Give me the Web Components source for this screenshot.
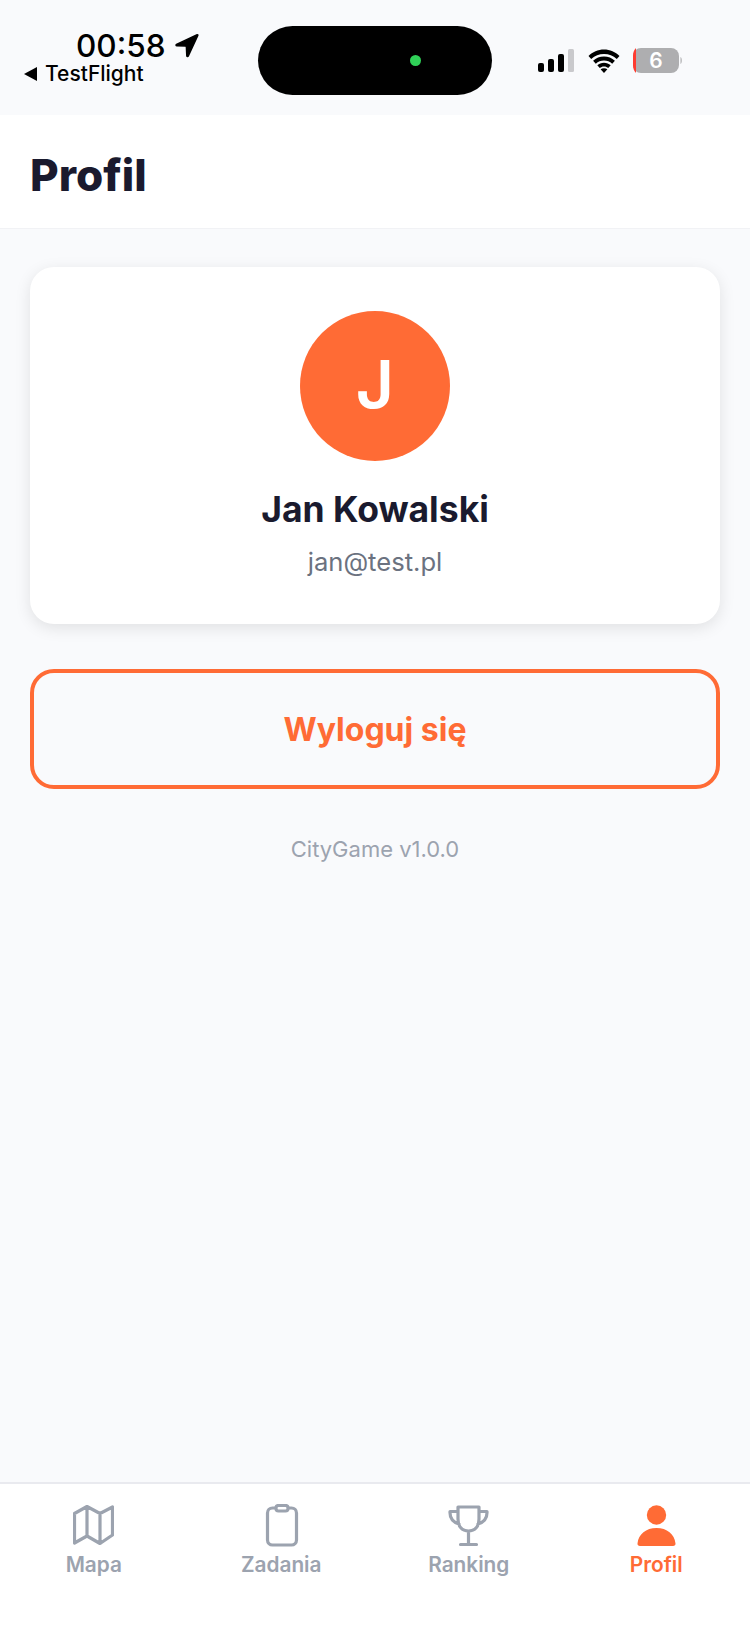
<!DOCTYPE html>
<html lang="pl">
<head>
<meta charset="utf-8">
<title>Profil</title>
<style>
  html, body { margin: 0; padding: 0; background: #f9fafc; }
  body { width: 750px; height: 1630px; overflow: hidden; font-family: Inter, "Liberation Sans", sans-serif; }
  app-shell { height: 1630px; }
</style>
</head>
<body>
<app-shell>
  <status-bar></status-bar>
  <page-header>Profil</page-header>
  <main-area>
    <profile-card name="Jan Kowalski" email="jan@test.pl"></profile-card>
    <logout-button>Wyloguj się</logout-button>
    <version-note>CityGame v1.0.0</version-note>
  </main-area>
  <tab-bar>
    <tab-item icon="map" label="Mapa"></tab-item>
    <tab-item icon="clipboard" label="Zadania"></tab-item>
    <tab-item icon="trophy" label="Ranking"></tab-item>
    <tab-item icon="person" label="Profil" active></tab-item>
  </tab-bar>
</app-shell>
<script>
// Simple helper, every element just sets its html in the shadow root
class Base extends HTMLElement {
  constructor() {
    super();
    this.attachShadow({ mode: 'open' });
  }
  connectedCallback() {
    this.shadowRoot.innerHTML = this.render();
  }
}

class AppShell extends Base {
  render() {
    return `<style>
      :host { display: flex; flex-direction: column; width: 750px; background: #f9fafc; }
    </style><slot></slot>`;
  }
}

class StatusBar extends Base {
  render() {
    return `<style>
      :host { display: flex; height: 115px; background: #f9fafc; color: #000; box-sizing: border-box; }
      .left { width: 258px; box-sizing: border-box; padding: 28px 0 0 24px; }
      .time { display: flex; align-items: center; margin-left: 52px; height: 35px; font-size: 31.5px; font-weight: 500; line-height: 35px; }
      .time svg { margin-left: 8px; }
      .back { display: flex; align-items: center; height: 20px; margin-top: 1px; font-size: 21px; font-weight: 500; line-height: 20px; }
      .back svg { margin-right: 8px; }
      .pill { width: 234px; height: 69px; margin-top: 26px; border-radius: 35px; background: #000; position: relative; }
      .dot { position: absolute; left: 152px; top: 29px; width: 11px; height: 11px; border-radius: 50%; background: #30d158; }
      .right { display: flex; align-items: flex-start; margin-left: 46px; padding-top: 48px; }
      .wifi { margin: 1px 13px 0 14px; }
      .batt { display: block; }
      .level { position: relative; width: 50px; height: 25px; }
      .level span { position: absolute; left: 0; top: 0; width: 46px; height: 25px; line-height: 25px; text-align: center; color: #fff; font-size: 21px; font-weight: 600; }
    </style>
    <div class="left">
      <div class="time">00:58
        <svg width="25" height="25" viewBox="0 0 25 25"><path d="M23.200 1.800 2.500 11.400c-.8.400-.5 1.400.3 1.400l8.700.3c.5 0 .9.400.9.900l.4 8.800c0 .8 1 1 1.400.3L23.800 2.400c.2-.4-.2-.8-.6-.6z" fill="#000" stroke="#000" stroke-width="1.500" stroke-linejoin="round"/></svg>
      </div>
      <div class="back">
        <svg width="13" height="14" viewBox="0 0 13 14"><path d="M0 7 13 0v14z" fill="#000"/></svg>TestFlight
      </div>
    </div>
    <div class="pill"><div class="dot"></div></div>
    <div class="right">
      <svg width="36" height="24" viewBox="0 0 36 24">
        <rect x="0" y="15" width="6" height="9" rx="2" fill="#000"/>
        <rect x="10" y="11" width="6" height="13" rx="2" fill="#000"/>
        <rect x="20" y="6" width="6" height="18" rx="2" fill="#000"/>
        <rect x="30" y="1" width="6" height="23" rx="1.500" fill="#c9c9cc"/>
      </svg>
      <svg class="wifi" width="32" height="24" viewBox="0 0 32 24">
        <path d="M16 5c5 0 9 1.700 12.800 5L31.500 7C27.500 3 22 .5 16 .5S4.500 3 .5 7l2.700 3C7 6.700 11 5 16 5z" fill="#000"/>
        <path d="M16 11.500c3.200 0 5.900 1.200 8.200 3.200l2.700-3c-3-2.600-6.700-4.200-10.900-4.200S8 9.100 5.100 11.700l2.700 3c2.300-2 5-3.200 8.200-3.200z" fill="#000"/>
        <path d="M16 17.500c1.800 0 3.100.6 4.200 1.500l2.500-2.800c-1.900-1.500-4-2.500-6.700-2.500s-4.800 1-6.700 2.500l2.500 2.800c1.100-.9 2.400-1.500 4.200-1.500z" fill="#000"/>
        <path d="M16 24l3.400-3.700c-.9-.7-2-1.100-3.400-1.100s-2.500.4-3.400 1.100z" fill="#000"/>
      </svg>
      <div class="level">
        <svg class="batt" width="50" height="25" viewBox="0 0 50 25">
          <rect x="0" y="0" width="46" height="25" rx="8" fill="#aeaeb0"/>
          <path d="M0 8c0-3.500 1.200-6.300 3-8v25c-1.800-1.700-3-4.500-3-8z" fill="#ff3b30"/>
          <path d="M47.500 9c1.700.8 1.700 6.200 0 7z" fill="#aeaeb0"/>
        </svg>
        <span>6</span>
      </div>
    </div>`;
  }
}

class PageHeader extends Base {
  render() {
    return `<style>
      :host { display: block; height: 114px; box-sizing: border-box; padding: 8px 30px 0; background: #fff; border-bottom: 1px solid #f1f2f5; color: #1a1a2e; font-size: 44px; font-weight: 800; line-height: 105px; }
    </style><slot></slot>`;
  }
}

class MainArea extends Base {
  render() {
    return `<style>
      :host { display: flex; flex-direction: column; flex: 1; padding: 38px 30px 0; background: #f9fafc; }
    </style><slot></slot>`;
  }
}

class ProfileCard extends Base {
  render() {
    const name = this.getAttribute('name');
    const email = this.getAttribute('email');
    return `<style>
      :host { display: flex; flex-direction: column; align-items: center; height: 357px; box-sizing: border-box; padding-top: 44px; background: #fff; border-radius: 24px; box-shadow: 0 4px 16px rgba(0,0,0,.1); }
      .avatar { width: 150px; height: 150px; border-radius: 50%; background: #ff6b35; color: #fff; font-size: 66px; font-weight: 600; line-height: 146px; text-align: center; }
      .name { margin-top: 27px; color: #1a1a2e; font-size: 35.500px; font-weight: 700; line-height: 44px; }
      .email { margin-top: 14px; color: #6b7280; font-size: 25.600px; line-height: 32px; }
    </style>
    <div class="avatar">${name[0]}</div>
    <div class="name">${name}</div>
    <div class="email">${email}</div>`;
  }
}

class LogoutButton extends Base {
  render() {
    return `<style>
      :host { display: block; margin-top: 45px; height: 120px; box-sizing: border-box; padding-top: 3px; border: 4px solid #ff6b35; border-radius: 24px; color: #ff6b35; font-size: 32px; font-weight: 700; line-height: 108px; text-align: center; }
    </style><slot></slot>`;
  }
}

class VersionNote extends Base {
  render() {
    return `<style>
      :host { display: block; margin-top: 46px; color: #9ca3af; font-size: 22px; line-height: 28px; text-align: center; }
    </style><slot></slot>`;
  }
}

class TabBar extends Base {
  render() {
    return `<style>
      :host { display: grid; grid-template-columns: repeat(4, 1fr); height: 148px; box-sizing: border-box; padding-top: 20px; background: #fff; border-top: 2px solid #e9eaef; }
    </style><slot></slot>`;
  }
}

const ICONS = {
  map: `<path d="M1.500 9.500 14 2.500l13 7 12.500-6.500V31L27 39.500 14 32 1.500 39z M14 2.500V32 M27 9.500V39.500"/>`,
  clipboard: `<rect x="6.500" y="4" width="29" height="37" rx="5"/><rect x="15" y="1.500" width="12" height="5.500" rx="2.500" fill="#fff"/>`,
  trophy: `<path d="M10 3h21v12c0 7.500-4 12-10.500 12S10 22.500 10 15z M10 7.500H2c-.3 5.500 2.500 10.500 9 12.500 M31 7.500h8c.3 5.500-2.500 10.500-9 12.500 M20.500 27v13.500 M12.500 40.500h16"/>`,
  person: `<circle cx="20.500" cy="11" r="9.700" fill="#ff6b35" stroke="none"/><path d="M1.500 39.500C2.500 30 10 24 20.500 24s18 6 19 15.500c.2 1.500-.8 2.500-2.500 2.500H4c-1.700 0-2.700-1-2.500-2.500z" fill="#ff6b35" stroke="none"/>`
};

class TabItem extends Base {
  render() {
    const color = this.hasAttribute('active') ? '#ff6b35' : '#9ca3af';
    return `<style>
      :host { display: flex; flex-direction: column; align-items: center; color: ${color}; }
      svg { display: block; }
      .label { margin-top: 4px; font-size: 20.800px; font-weight: 600; line-height: 24px; }
    </style>
    <svg width="41" height="45" viewBox="0 0 41 45" fill="none" stroke="${color}" stroke-width="3.200" stroke-linejoin="round" stroke-linecap="round">${ICONS[this.getAttribute('icon')]}</svg>
    <div class="label">${this.getAttribute('label')}</div>`;
  }
}

customElements.define('app-shell', AppShell);
customElements.define('status-bar', StatusBar);
customElements.define('page-header', PageHeader);
customElements.define('main-area', MainArea);
customElements.define('profile-card', ProfileCard);
customElements.define('logout-button', LogoutButton);
customElements.define('version-note', VersionNote);
customElements.define('tab-bar', TabBar);
customElements.define('tab-item', TabItem);
</script>
</body>
</html>
